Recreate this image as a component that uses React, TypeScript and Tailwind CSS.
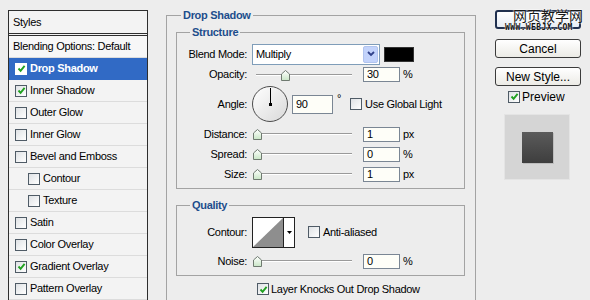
import React from "react";

const font = { fontFamily: '"Liberation Sans", Arial, sans-serif' };

function Check({ checked, onBlue }: { checked?: boolean; onBlue?: boolean }) {
  return (
    <span
      className={
        "w-[12px] h-[12px] shrink-0 flex items-center justify-center border " +
        (onBlue ? "border-white bg-white" : "border-[#4f5b66] bg-linear-to-br from-[#dfe2e5] to-white")
      }
    >
      {checked && (
        <svg width="9" height="9" viewBox="0 0 9 9">
          <path d="M1.5 4.5 L3.6 6.8 L7.6 1.8" stroke="#21a121" strokeWidth="1.9" fill="none" />
        </svg>
      )}
    </span>
  );
}

function StyleRow({ label, checked, selected, indent }: { label: string; checked?: boolean; selected?: boolean; indent?: boolean }) {
  return (
    <div
      className={
        "h-[22px] flex items-center border-b " +
        (selected ? "bg-[#316ac5] border-[#316ac5] text-white font-bold" : "border-[#dcdcdc] text-black") +
        (indent ? " pl-[19px]" : " pl-[6px]")
      }
    >
      <Check checked={checked} onBlue={selected} />
      <span className="ml-[3px]">{label}</span>
    </div>
  );
}

function Label({ children }: { children: React.ReactNode }) {
  return <span className="w-[70px] shrink-0 text-right">{children}</span>;
}

function Slider({ pos }: { pos: number }) {
  return (
    <div className="relative w-[100px] h-[14px] shrink-0">
      <div className="absolute left-[4px] right-0 top-[6px] h-[2px] border-t border-[#9a9a9a] border-b-white border-b" />
      <svg className="absolute top-[2px]" style={{ left: pos - 4 }} width="9" height="11" viewBox="0 0 9 11">
        <defs>
          <linearGradient id="th" x1="0" y1="0" x2="0" y2="1">
            <stop offset="0" stopColor="#ffffff" />
            <stop offset="1" stopColor="#c9e6c6" />
          </linearGradient>
        </defs>
        <path d="M0.5 4 L4.5 0.5 L8.5 4 L8.5 10.5 L0.5 10.5 Z" fill="url(#th)" stroke="#6f7a70" />
      </svg>
    </div>
  );
}

function NumBox({ value, w = 37, h = 15 }: { value: string; w?: number; h?: number }) {
  return (
    <span
      className="shrink-0 border border-[#7a8694] bg-[#fefef8] pl-[3px] flex items-center leading-none"
      style={{ width: w, height: h }}
    >
      {value}
    </span>
  );
}

function Btn({ children }: { children: React.ReactNode }) {
  return (
    <div className="w-[86px] h-[19px] rounded-[3px] border border-[#3b3b3b] bg-linear-to-b from-white to-[#ecebe6] flex items-center justify-center text-[12px]">
      {children}
    </div>
  );
}

export default function App() {
  return (
    <div
      className="w-[590px] h-[300px] overflow-hidden bg-[#ededed] flex items-start text-[11px] tracking-[-0.3px] text-black"
      style={font}
    >
      {/* styles list */}
      <div className="ml-[8px] mt-[10px] w-[140px] h-[300px] border border-[#2e2e2e] bg-[#f3f3f3] shrink-0">
        <div className="h-[25px] pl-[4px] flex items-center border-b-[3px] border-double border-[#2e2e2e]">Styles</div>
        <div className="h-[22px] pl-[4px] flex items-center border-b border-[#dcdcdc] bg-[#f7f7f7]">Blending Options: Default</div>
        <StyleRow label="Drop Shadow" checked selected />
        <StyleRow label="Inner Shadow" checked />
        <StyleRow label="Outer Glow" />
        <StyleRow label="Inner Glow" />
        <StyleRow label="Bevel and Emboss" />
        <StyleRow label="Contour" indent />
        <StyleRow label="Texture" indent />
        <StyleRow label="Satin" />
        <StyleRow label="Color Overlay" />
        <StyleRow label="Gradient Overlay" checked />
        <StyleRow label="Pattern Overlay" />
      </div>

      {/* drop shadow settings */}
      <fieldset className="ml-[18px] mt-[8px] w-[310px] h-[320px] border border-[#a3a3a3] shrink-0">
        <legend className="ml-[14px] px-[2px] leading-[14px] font-bold text-[#1d4d8c]">Drop Shadow</legend>

        <fieldset className="ml-[9px] mt-[3px] w-[289px] border border-[#a3a3a3] pb-[4px]">
          <legend className="ml-[13px] px-[2px] leading-[14px] font-bold text-[#1d4d8c]">Structure</legend>

          <div className="mt-[4px] h-[22px] flex items-center">
            <Label>Blend Mode:</Label>
            <div className="ml-[5px] w-[128px] h-[21px] border border-[#7f9db9] bg-white flex items-center justify-between">
              <span className="pl-[3px]">Multiply</span>
              <span className="w-[15px] h-[17px] mr-[1px] rounded-[2px] bg-[#c3d3fb] border border-[#b1c4ee] flex items-center justify-center">
                <svg width="8" height="6" viewBox="0 0 8 6">
                  <path d="M1 1 L4 4 L7 1" stroke="#30418a" strokeWidth="1.8" fill="none" />
                </svg>
              </span>
            </div>
            <span className="ml-[4px] w-[30px] h-[15px] bg-black border border-[#333]" />
          </div>

          <div className="h-[19px] flex items-center">
            <Label>Opacity:</Label>
            <span className="ml-[5px]"><Slider pos={33} /></span>
            <span className="ml-[11px]"><NumBox value="30" /></span>
            <span className="ml-[3px]">%</span>
          </div>

          <div className="h-[40px] flex items-center">
            <Label>Angle:</Label>
            <div className="ml-[5px] relative w-[36px] h-[36px] rounded-full border border-[#4d4d4d] bg-linear-to-br from-white to-[#d9d9d9] shrink-0">
              <span className="absolute left-[17px] top-[1px] w-[1px] h-[17px] bg-black" />
              <span className="absolute left-[16px] top-[16px] w-[3px] h-[3px] bg-black" />
            </div>
            <span className="ml-[4px]"><NumBox value="90" w={41} h={19} /></span>
            <span className="ml-[4px] self-start mt-[9px] leading-none">°</span>
            <span className="ml-[9px]"><Check /></span>
            <span className="ml-[3px]">Use Global Light</span>
          </div>

          <div className="h-[20px] flex items-center">
            <Label>Distance:</Label>
            <span className="ml-[5px]"><Slider pos={5} /></span>
            <span className="ml-[11px]"><NumBox value="1" /></span>
            <span className="ml-[3px]">px</span>
          </div>
          <div className="h-[20px] flex items-center">
            <Label>Spread:</Label>
            <span className="ml-[5px]"><Slider pos={5} /></span>
            <span className="ml-[11px]"><NumBox value="0" /></span>
            <span className="ml-[3px]">%</span>
          </div>
          <div className="h-[20px] flex items-center">
            <Label>Size:</Label>
            <span className="ml-[5px]"><Slider pos={5} /></span>
            <span className="ml-[11px]"><NumBox value="1" /></span>
            <span className="ml-[3px]">px</span>
          </div>
        </fieldset>

        <fieldset className="ml-[9px] mt-[9px] w-[289px] border border-[#a3a3a3] pb-[4px]">
          <legend className="ml-[13px] px-[2px] leading-[14px] font-bold text-[#1d4d8c]">Quality</legend>

          <div className="mt-[4px] h-[32px] flex items-center">
            <Label>Contour:</Label>
            <div className="ml-[5px] h-[31px] flex border border-[#222] bg-white">
              <svg width="30" height="29" viewBox="0 0 30 29" className="block">
                <rect width="30" height="29" fill="#fff" />
                <path d="M0 29 L30 0 L30 29 Z" fill="#8e8e8e" />
              </svg>
              <span className="w-[11px] border-l border-[#222] flex items-center justify-center">
                <svg width="5" height="3" viewBox="0 0 5 3">
                  <path d="M0 0 L5 0 L2.5 3 Z" fill="#000" />
                </svg>
              </span>
            </div>
            <span className="ml-[13px]"><Check /></span>
            <span className="ml-[3px]">Anti-aliased</span>
          </div>

          <div className="mt-[3px] h-[20px] flex items-center">
            <Label>Noise:</Label>
            <span className="ml-[5px]"><Slider pos={5} /></span>
            <span className="ml-[11px]"><NumBox value="0" /></span>
            <span className="ml-[3px]">%</span>
          </div>
        </fieldset>

        <div className="mt-[4px] h-[18px] pl-[90px] flex items-center">
          <Check checked />
          <span className="ml-[2px]">Layer Knocks Out Drop Shadow</span>
        </div>
      </fieldset>

      {/* buttons */}
      <div className="ml-[19px] mt-[10px] w-[86px] flex flex-col shrink-0 tracking-normal">
        <div className="relative w-[86px] h-[19px] rounded-[3px] border-2 border-[#20304f] bg-linear-to-b from-white to-[#e6ecf5]">
          <span
            className="absolute left-[16px] top-[-4px] text-[14px] leading-[14px] text-[#1a1a1a] whitespace-nowrap"
            style={{ fontFamily: '"Noto Sans CJK SC", sans-serif', textShadow: "0 0 2px #fff, 0 0 2px #fff" }}
          >
            网页教学网
          </span>
          <span
            className="absolute left-[8px] top-[12px] text-[8px] leading-[8px] font-bold text-[#111] whitespace-nowrap tracking-[0.4px]"
            style={{ fontFamily: '"DejaVu Sans Mono", monospace', textShadow: "0 0 2px #fff, 0 0 1px #fff" }}
          >
            WWW.WEBJX.COM
          </span>
        </div>
        <div className="mt-[10px]"><Btn>Cancel</Btn></div>
        <div className="mt-[9px]"><Btn>New Style...</Btn></div>
        <div className="mt-[4px] h-[13px] pl-[13px] flex items-center text-[12px]">
          <Check checked />
          <span className="ml-[2px]">Preview</span>
        </div>
        <div className="mt-[11px] ml-[9px] w-[66px] h-[66px] bg-[#d5d5d5] border border-[#e4e4e4] flex items-center justify-center">
          <div className="w-[31px] h-[31px] bg-linear-to-b from-[#5b5b5b] to-[#3e3e3e] shadow-[1px_1px_0_#bdbdbd]" />
        </div>
      </div>
    </div>
  );
}
